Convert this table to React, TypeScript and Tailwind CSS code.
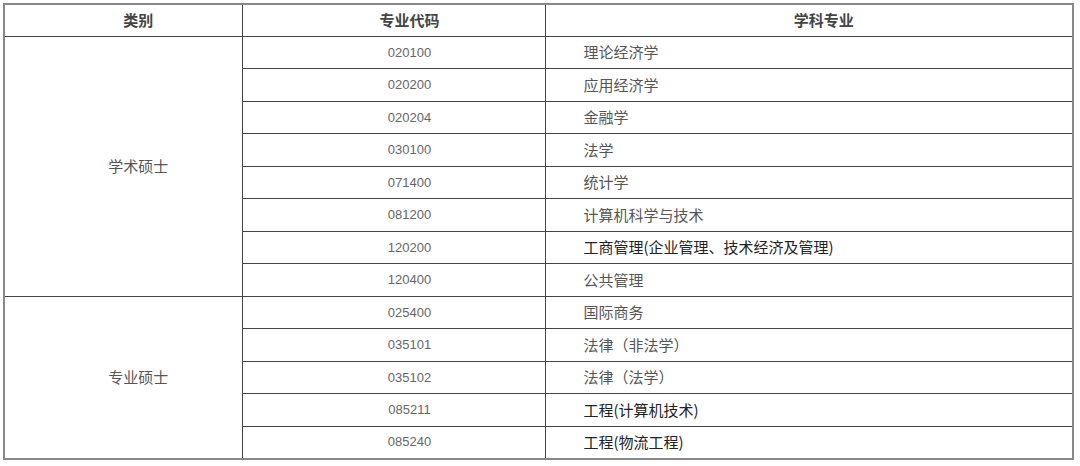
import React from "react";

const academic = [
  ["020100", "理论经济学", false],
  ["020200", "应用经济学", false],
  ["020204", "金融学", false],
  ["030100", "法学", false],
  ["071400", "统计学", false],
  ["081200", "计算机科学与技术", false],
  ["120200", "工商管理(企业管理、技术经济及管理)", true],
  ["120400", "公共管理", false],
] as const;

const professional = [
  ["025400", "国际商务", false],
  ["035101", "法律（非法学）", false],
  ["035102", "法律（法学）", false],
  ["085211", "工程(计算机技术)", true],
  ["085240", "工程(物流工程)", true],
] as const;

const cjk = "font-['Noto_Sans_CJK_SC',sans-serif]";

const App: React.FC = () => {
  const renderRows = (rows: readonly (readonly [string, string, boolean])[], label: string) =>
    rows.map(([code, name, dark], i) => (
      <tr key={code} className="h-[32.5px]">
        {i === 0 && (
          <td
            rowSpan={rows.length}
            className={`border border-[#444] pl-[30px] text-center text-[15px] text-[#555] ${cjk}`}
          >
            {label}
          </td>
        )}
        <td className="border border-[#444] pl-[32px] text-center font-['Liberation_Sans',sans-serif] text-[13px] text-[#666]">
          {code}
        </td>
        <td
          className={`border border-[#444] pl-[38px] text-left text-[15px] ${cjk} ${dark ? "text-[#222]" : "text-[#555]"}`}
        >
          {name}
        </td>
      </tr>
    ));

  return (
    <div className="w-[1080px] h-[466px] bg-white pt-[3px] pl-[3px]">
      <table className="w-[1071px] border-collapse border-2 border-[#888] table-fixed">
        <colgroup>
          <col className="w-[238px]" />
          <col className="w-[303px]" />
          <col />
        </colgroup>
        <thead>
          <tr className="h-[32px]">
            <th className={`border border-[#444] pl-[30px] text-center text-[15px] font-bold text-[#444] ${cjk}`}>类别</th>
            <th className={`border border-[#444] pl-[32px] text-center text-[15px] font-bold text-[#444] ${cjk}`}>专业代码</th>
            <th className={`border border-[#444] pl-[30px] text-center text-[15px] font-bold text-[#444] ${cjk}`}>学科专业</th>
          </tr>
        </thead>
        <tbody>
          {renderRows(academic, "学术硕士")}
          {renderRows(professional, "专业硕士")}
        </tbody>
      </table>
    </div>
  );
};

export default App;
